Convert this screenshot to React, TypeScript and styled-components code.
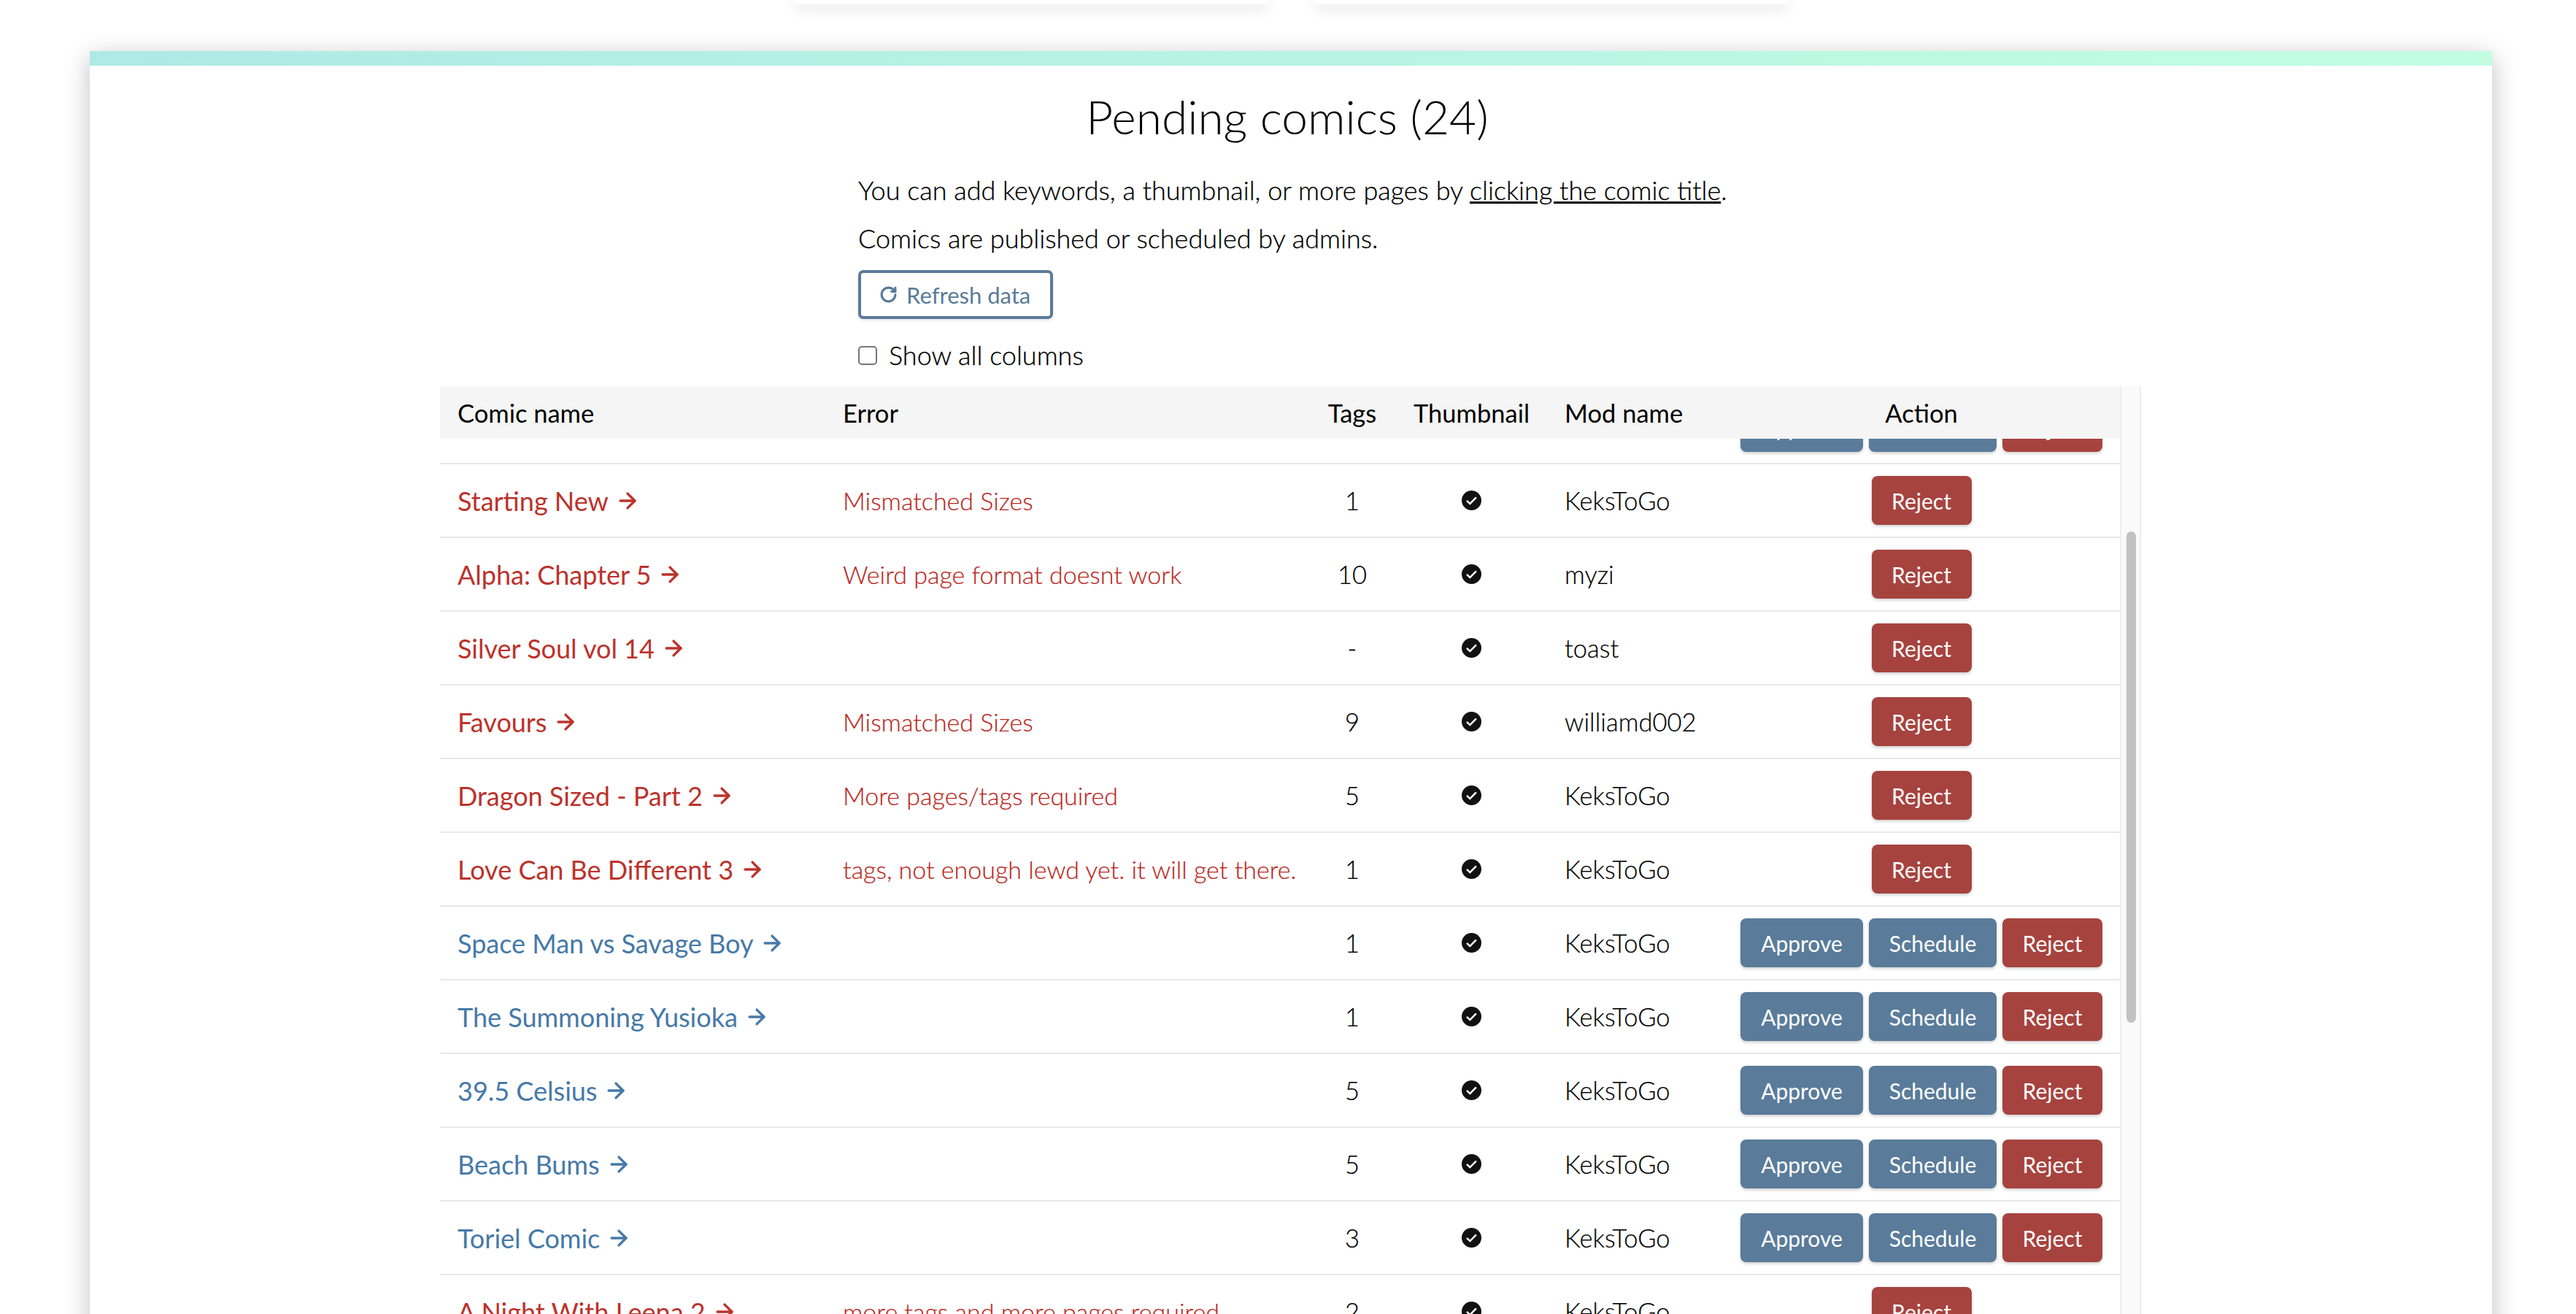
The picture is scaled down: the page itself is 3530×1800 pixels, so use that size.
import React from 'react';
import styled, { createGlobalStyle } from 'styled-components';
import { ArrowRight, RotateCw } from 'lucide-react';

const GlobalStyle = createGlobalStyle`
  html, body {
    margin: 0;
    padding: 0;
    height: 1800px;
    overflow: hidden;
    background: #fff;
    font-family: 'Lato', 'Open Sans', sans-serif;
    color: #000;
  }
  * {
    box-sizing: border-box;
  }
`;

const TopCards = styled.div`
  display: flex;
  justify-content: center;
  gap: 63px;
  height: 6px;
  padding-left: 9px;
`;

const TopCard = styled.div`
  width: 649px;
  height: 6px;
  background: #fff;
  box-shadow: 0 4px 20px rgba(0, 0, 0, 0.2);
`;

const Panel = styled.section`
  margin: 64px 115px 0 123px;
  height: 1800px;
  background: #fff;
  border-top: 20px solid;
  border-image: linear-gradient(90deg, #aeeae5, #c2fde2) 1;
  box-shadow: 0 8px 32px rgba(0, 0, 0, 0.26);
`;

const Title = styled.h1`
  margin: 0;
  padding: 32px 10px 0 0;
  font-size: 64px;
  line-height: 76px;
  font-weight: 300;
  text-align: center;
`;

const Intro = styled.div`
  margin: 40px 0 0 1053px;
`;

const IntroLine = styled.p`
  margin: 0 0 21px;
  font-size: 36px;
  line-height: 45px;
  font-weight: 300;
  -webkit-text-stroke: 0.3px;
  a {
    color: inherit;
  }
`;

const RefreshButton = styled.button`
  display: flex;
  align-items: center;
  gap: 12px;
  width: 267px;
  height: 67px;
  margin-top: 11px;
  padding: 0 0 0 25px;
  background: #fff;
  border: 4px solid #5a7b9a;
  border-radius: 7px;
  color: #5a7b9a;
  font: 400 31px 'Lato', sans-serif;
  box-shadow: 0 2px 4px rgba(0, 0, 0, 0.1);
`;

const ColumnToggle = styled.label`
  display: flex;
  align-items: center;
  gap: 16px;
  margin-top: 27px;
  font-size: 36px;
  line-height: 45px;
  font-weight: 300;
  -webkit-text-stroke: 0.3px;
`;

const CheckBox = styled.span`
  width: 26px;
  height: 26px;
  border: 2px solid #767676;
  border-radius: 5px;
  background: #fff;
`;

const TableWrap = styled.div`
  display: flex;
  margin: 20px 0 0 480px;
  width: 2331px;
`;

const Table = styled.div`
  width: 2302px;
`;

const columns = '528px 662px 120px 207px 241px 544px';

const HeaderRow = styled.div`
  display: grid;
  grid-template-columns: ${columns};
  align-items: center;
  height: 72px;
  background: #f5f5f5;
  font-size: 34.5px;
  font-weight: 400;
`;

const Row = styled.div`
  display: grid;
  grid-template-columns: ${columns};
  align-items: center;
  height: 101px;
  border-bottom: 2px solid #e8e8e8;
  font-size: 34.5px;
  font-weight: 300;
  -webkit-text-stroke: 0.2px;
`;

const ClippedRow = styled(Row)`
  height: 35px;
  overflow: hidden;
  align-content: end;
  padding-bottom: 15px;
`;

const Cell = styled.div<{ $center?: boolean }>`
  padding: 0 24px;
  white-space: nowrap;
  text-align: ${(p) => (p.$center ? 'center' : 'left')};
`;

const ComicLink = styled.a<{ $error: boolean }>`
  display: inline-flex;
  align-items: center;
  gap: 9px;
  font-size: 36px;
  font-weight: 400;
  -webkit-text-stroke: 0;
  color: ${(p) => (p.$error ? '#bc322b' : '#4679a8')};
`;

const ErrorText = styled.span`
  color: #bb2620;
  font-size: 34px;
  font-weight: 300;
`;

const ThumbIcon = styled.svg`
  display: block;
  width: 27px;
  height: 27px;
  margin: 0 auto;
`;

const Actions = styled.div`
  display: flex;
  justify-content: center;
  gap: 8px;
  -webkit-text-stroke: 0;
`;

const ActionButton = styled.button<{ $kind: 'approve' | 'schedule' | 'reject' }>`
  height: 67px;
  width: ${(p) => ({ approve: 168, schedule: 175, reject: 137 }[p.$kind])}px;
  flex: none;
  padding: 0;
  border: 0;
  border-radius: 8px;
  background: ${(p) => (p.$kind === 'reject' ? '#a6433f' : '#5a7b9a')};
  color: #fff;
  font: 400 30px 'Lato', sans-serif;
  box-shadow: 0 2px 4px rgba(0, 0, 0, 0.2);
`;

const Track = styled.div`
  width: 29px;
  height: 1300px;
  padding: 199px 5px 0 7px;
  background: #fafafa;
  border-left: 2px solid #eeeeee;
  border-right: 2px solid #eeeeee;
`;

const Thumb = styled.div`
  height: 673px;
  border-radius: 8px;
  background: #c1c1c1;
`;

type Comic = {
  name: string;
  error?: string;
  tags: string;
  mod: string;
  ready?: boolean;
};

const comics: Comic[] = [
  { name: 'Starting New', error: 'Mismatched Sizes', tags: '1', mod: 'KeksToGo' },
  { name: 'Alpha: Chapter 5', error: 'Weird page format doesnt work', tags: '10', mod: 'myzi' },
  { name: 'Silver Soul vol 14', error: '', tags: '-', mod: 'toast' },
  { name: 'Favours', error: 'Mismatched Sizes', tags: '9', mod: 'williamd002' },
  { name: 'Dragon Sized - Part 2', error: 'More pages/tags required', tags: '5', mod: 'KeksToGo' },
  { name: 'Love Can Be Different 3', error: 'tags, not enough lewd yet. it will get there.', tags: '1', mod: 'KeksToGo' },
  { name: 'Space Man vs Savage Boy', tags: '1', mod: 'KeksToGo', ready: true },
  { name: 'The Summoning Yusioka', tags: '1', mod: 'KeksToGo', ready: true },
  { name: '39.5 Celsius', tags: '5', mod: 'KeksToGo', ready: true },
  { name: 'Beach Bums', tags: '5', mod: 'KeksToGo', ready: true },
  { name: 'Toriel Comic', tags: '3', mod: 'KeksToGo', ready: true },
  { name: 'A Night With Leena 2', error: 'more tags and more pages required', tags: '2', mod: 'KeksToGo' },
];

const CheckIcon = () => (
  <ThumbIcon viewBox="0 0 24 24">
    <circle cx="12" cy="12" r="12" fill="#111" />
    <path d="M6.2 12.4l3.9 3.7 7.6-7.8" fill="none" stroke="#fff" strokeWidth="2.2" />
  </ThumbIcon>
);

const ActionButtons = ({ ready }: { ready?: boolean }) => (
  <Actions>
    {ready && <ActionButton $kind="approve">Approve</ActionButton>}
    {ready && <ActionButton $kind="schedule">Schedule</ActionButton>}
    <ActionButton $kind="reject">Reject</ActionButton>
  </Actions>
);

const App: React.FC = () => {
  return (
    <>
      <GlobalStyle />
      <TopCards>
        <TopCard />
        <TopCard />
      </TopCards>
      <Panel>
        <Title>Pending comics (24)</Title>
        <Intro>
          <IntroLine>
            You can add keywords, a thumbnail, or more pages by <a href="#comic">clicking the comic title</a>.
          </IntroLine>
          <IntroLine>Comics are published or scheduled by admins.</IntroLine>
          <RefreshButton>
            <RotateCw size={25} strokeWidth={3} />
            Refresh data
          </RefreshButton>
          <ColumnToggle>
            <CheckBox />
            Show all columns
          </ColumnToggle>
        </Intro>
        <TableWrap>
          <Table>
            <HeaderRow>
              <Cell>Comic name</Cell>
              <Cell>Error</Cell>
              <Cell $center>Tags</Cell>
              <Cell $center>Thumbnail</Cell>
              <Cell>Mod name</Cell>
              <Cell $center>Action</Cell>
            </HeaderRow>
            <ClippedRow>
              <Cell />
              <Cell />
              <Cell />
              <Cell />
              <Cell />
              <Actions>
                <ActionButton $kind="approve">Approve</ActionButton>
                <ActionButton $kind="schedule">Schedule</ActionButton>
                <ActionButton $kind="reject">Reject</ActionButton>
              </Actions>
            </ClippedRow>
            {comics.map((comic) => (
              <Row key={comic.name}>
                <Cell>
                  <ComicLink $error={!comic.ready}>
                    {comic.name}
                    <ArrowRight size={34} strokeWidth={2.4} />
                  </ComicLink>
                </Cell>
                <Cell>
                  <ErrorText>{comic.error}</ErrorText>
                </Cell>
                <Cell $center>{comic.tags}</Cell>
                <Cell $center>
                  <CheckIcon />
                </Cell>
                <Cell>{comic.mod}</Cell>
                <Cell $center>
                  <ActionButtons ready={comic.ready} />
                </Cell>
              </Row>
            ))}
          </Table>
          <Track>
            <Thumb />
          </Track>
        </TableWrap>
      </Panel>
    </>
  );
};

export default App;
